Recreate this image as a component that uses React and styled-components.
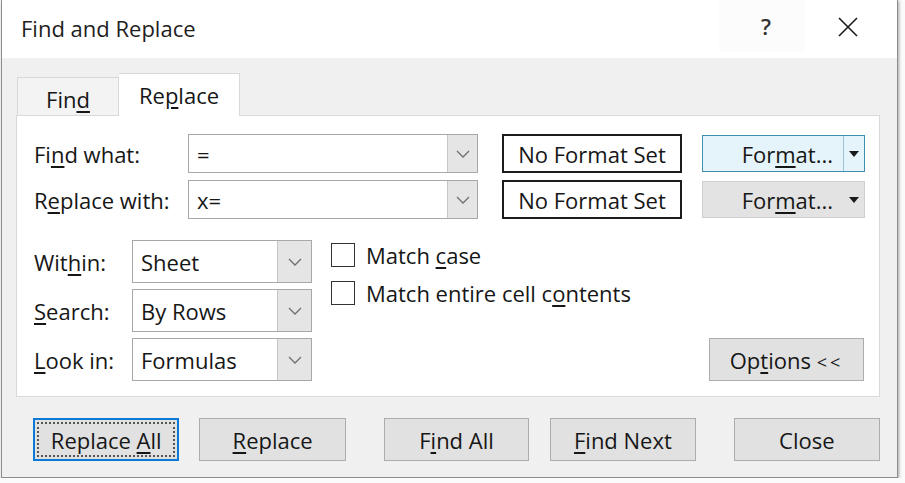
import React from "react";
import styled, { createGlobalStyle } from "styled-components";

const GlobalStyle = createGlobalStyle`
  html, body {
    margin: 0;
    padding: 0;
    background: #fbfbfb;
  }
  body {
    font-family: "Open Sans", "Noto Sans", sans-serif;
    font-size: 22px;
    color: #161616;
  }
  * { box-sizing: border-box; }
`;

function Chevron() {
  return (
    <svg width="14" height="8" viewBox="0 0 14 8">
      <polyline points="1,1 7,7 13,1" fill="none" stroke="#6e6e6e" strokeWidth="1.3" />
    </svg>
  );
}

function Caret() {
  return (
    <svg width="10" height="6" viewBox="0 0 10 6">
      <polygon points="0,0 10,0 5,6" fill="#1a1a1a" />
    </svg>
  );
}

function ComboBox({ value, width, height, arrow }) {
  return (
    <Combo $w={width} $h={height}>
      <ComboValue>{value}</ComboValue>
      <ComboArrow $w={arrow}>
        <Chevron />
      </ComboArrow>
    </Combo>
  );
}

function FormatButton({ focused }) {
  return (
    <FormatBtn $focused={focused}>
      <FormatLabel>
        <span>
          For<U>m</U>at...
        </span>
      </FormatLabel>
      <FormatDrop $focused={focused}>
        <Caret />
      </FormatDrop>
    </FormatBtn>
  );
}

export default function App() {
  return (
    <>
      <GlobalStyle />
      <Window>
        <TitleBar>
          <Title>Find and Replace</Title>
          <Caption>
            <HelpBtn>?</HelpBtn>
            <CloseBtn>
              <svg width="22" height="22" viewBox="0 0 22 22">
                <path d="M2 2 L20 20 M20 2 L2 20" stroke="#1a1a1a" strokeWidth="1.6" />
              </svg>
            </CloseBtn>
          </Caption>
        </TitleBar>

        <Body>
          <Tabs>
            <Tab>
              <span>
                Fin<U>d</U>
              </span>
            </Tab>
            <Tab $active>
              <span>
                Re<U>p</U>lace
              </span>
            </Tab>
          </Tabs>

          <Panel>
            <TopGrid>
              <Label>
                Fi<U>n</U>d what:
              </Label>
              <ComboBox value="=" width={290} height={39} arrow={30} />
              <FormatBox>No Format Set</FormatBox>
              <FormatButton focused />

              <Label>
                R<U>e</U>place with:
              </Label>
              <ComboBox value="x=" width={290} height={39} arrow={30} />
              <FormatBox>No Format Set</FormatBox>
              <FormatButton />
            </TopGrid>

            <Lower>
              <OptionGrid>
                <Label>
                  Wit<U>h</U>in:
                </Label>
                <ComboBox value="Sheet" width={180} height={43} arrow={34} />
                <Label>
                  <U>S</U>earch:
                </Label>
                <ComboBox value="By Rows" width={180} height={43} arrow={34} />
                <Label>
                  <U>L</U>ook in:
                </Label>
                <ComboBox value="Formulas" width={180} height={43} arrow={34} />
              </OptionGrid>

              <Checks>
                <CheckRow>
                  <Box />
                  <span>
                    Match <U>c</U>ase
                  </span>
                </CheckRow>
                <CheckRow>
                  <Box />
                  <span>
                    Match entire cell c<U>o</U>ntents
                  </span>
                </CheckRow>
              </Checks>

              <OptionsBtn>
                <span>
                  Op<U>t</U>ions <Arrows>&lt;&lt;</Arrows>
                </span>
              </OptionsBtn>
            </Lower>
          </Panel>

          <Actions>
            <Button $focused>
              <FocusRect>
                <span>
                  Replace <U>A</U>ll
                </span>
              </FocusRect>
            </Button>
            <Button $gap={20}>
              <span>
                <U>R</U>eplace
              </span>
            </Button>
            <Button $gap={38} $w={146}>
              <span>
                F<U>i</U>nd All
              </span>
            </Button>
            <Button $gap={21} $w={146}>
              <span>
                <U>F</U>ind Next
              </span>
            </Button>
            <Button $gap={38}>
              <span>Close</span>
            </Button>
          </Actions>
        </Body>
      </Window>
    </>
  );
}

const Window = styled.div`
  margin-left: 1px;
  width: 897px;
  height: 478px;
  border: 1px solid #8d8d8d;
  border-top: none;
  background: #f0f0f0;
  box-shadow: 1px 1px 3px rgba(0, 0, 0, 0.35);
  display: flex;
  flex-direction: column;
`;

const TitleBar = styled.div`
  height: 58px;
  background: #ffffff;
  display: flex;
  align-items: center;
  justify-content: space-between;
  padding-left: 19px;
`;

const Title = styled.div`
  font-size: 22px;
  color: #1e1e1e;
  margin-top: -2px;
`;

const Caption = styled.div`
  display: flex;
  height: 100%;
`;

const HelpBtn = styled.div`
  width: 86px;
  height: 52px;
  display: flex;
  align-items: center;
  justify-content: center;
  padding-left: 8px;
  font-size: 22px;
  font-weight: 600;
  color: #333;
  background: #fcfcfc;
`;

const CloseBtn = styled.div`
  width: 92px;
  display: flex;
  align-items: center;
  justify-content: center;
  padding-right: 6px;
  margin-top: -4px;
`;

const Body = styled.div`
  flex: 1;
  padding: 15px 17px 0 14px;
`;

const Tabs = styled.div`
  display: flex;
  align-items: flex-end;
  height: 42px;
  padding-left: 1px;
  position: relative;
  z-index: 1;
`;

const Tab = styled.div`
  width: ${(p) => (p.$active ? 121 : 102)}px;
  height: ${(p) => (p.$active ? 43 : 38)}px;
  margin-bottom: ${(p) => (p.$active ? -1 : 0)}px;
  background: ${(p) => (p.$active ? "#ffffff" : "#f3f3f3")};
  border: 1px solid #d9d9d9;
  border-bottom: none;
  border-left: ${(p) => (p.$active ? "none" : "1px solid #d9d9d9")};
  display: flex;
  align-items: center;
  justify-content: center;
  padding-top: ${(p) => (p.$active ? 0 : 4)}px;
`;

const Panel = styled.div`
  height: 282px;
  background: #ffffff;
  border: 1px solid #d9d9d9;
  padding: 18px 15px 15px 17px;
  display: flex;
  flex-direction: column;
`;

const TopGrid = styled.div`
  display: grid;
  grid-template-columns: 154px 290px 180px 163px;
  grid-template-rows: 39px 39px;
  row-gap: 7px;
  align-items: center;

  & > :nth-child(4n + 3) {
    margin-left: 24px;
  }
  & > :nth-child(4n) {
    margin-left: 44px;
  }
`;

const Label = styled.div`
  white-space: nowrap;
`;

const Combo = styled.div`
  display: flex;
  width: ${(p) => p.$w}px;
  height: ${(p) => p.$h}px;
  border: 1px solid #a8a8a8;
  background: #ffffff;
`;

const ComboValue = styled.div`
  flex: 1;
  display: flex;
  align-items: center;
  padding-left: 8px;
`;

const ComboArrow = styled.div`
  width: ${(p) => p.$w}px;
  background: #e5e5e5;
  border-left: 1px solid #c6c6c6;
  display: flex;
  align-items: center;
  justify-content: center;
`;

const FormatBox = styled.div`
  width: 180px;
  height: 39px;
  border: 2px solid #1c1c1c;
  display: flex;
  align-items: center;
  justify-content: center;
  background: #fff;
`;

const FormatBtn = styled.div`
  width: 163px;
  height: 37px;
  display: flex;
  border: 1px solid ${(p) => (p.$focused ? "#3f8fb3" : "#cfcfcf")};
  background: ${(p) => (p.$focused ? "#e5f3fb" : "#e3e3e3")};
`;

const FormatLabel = styled.div`
  flex: 1;
  display: flex;
  align-items: center;
  justify-content: flex-end;
  padding-right: 10px;
`;

const FormatDrop = styled.div`
  width: 21px;
  display: flex;
  align-items: center;
  justify-content: center;
  border-left: 1px solid ${(p) => (p.$focused ? "#9cc3d6" : "transparent")};
`;

const Lower = styled.div`
  flex: 1;
  display: flex;
  margin-top: 21px;
`;

const OptionGrid = styled.div`
  display: grid;
  grid-template-columns: 98px 180px;
  grid-auto-rows: 43px;
  row-gap: 6px;
  align-items: center;
`;

const Checks = styled.div`
  flex: 1;
  display: flex;
  flex-direction: column;
  gap: 14px;
  padding: 3px 0 0 19px;
`;

const CheckRow = styled.div`
  display: flex;
  align-items: center;
  gap: 11px;
  height: 24px;
`;

const Box = styled.span`
  width: 24px;
  height: 24px;
  flex: none;
  border: 1.5px solid #333;
  background: #fff;
`;

const OptionsBtn = styled.div`
  align-self: flex-end;
  width: 155px;
  height: 43px;
  background: #e1e1e1;
  border: 1px solid #adadad;
  display: flex;
  align-items: center;
  justify-content: center;
`;

const Arrows = styled.span`
  letter-spacing: 3px;
  font-size: 18px;
`;

const Actions = styled.div`
  display: flex;
  margin-top: 21px;
  padding-left: 17px;
`;

const Button = styled.div`
  width: ${(p) => p.$w || 147}px;
  height: 43px;
  margin-left: ${(p) => p.$gap || 0}px;
  background: #e1e1e1;
  border: ${(p) => (p.$focused ? "2px solid #0a7ad6" : "1px solid #adadad")};
  display: flex;
  align-items: center;
  justify-content: center;
  padding: ${(p) => (p.$focused ? "2px" : "0")};
`;

const FocusRect = styled.div`
  width: 100%;
  height: 100%;
  border: 2px dotted #555;
  display: flex;
  align-items: center;
  justify-content: center;
`;

const U = styled.span`
  text-decoration: underline;
  text-underline-offset: 3px;
  text-decoration-thickness: 1.5px;
`;
